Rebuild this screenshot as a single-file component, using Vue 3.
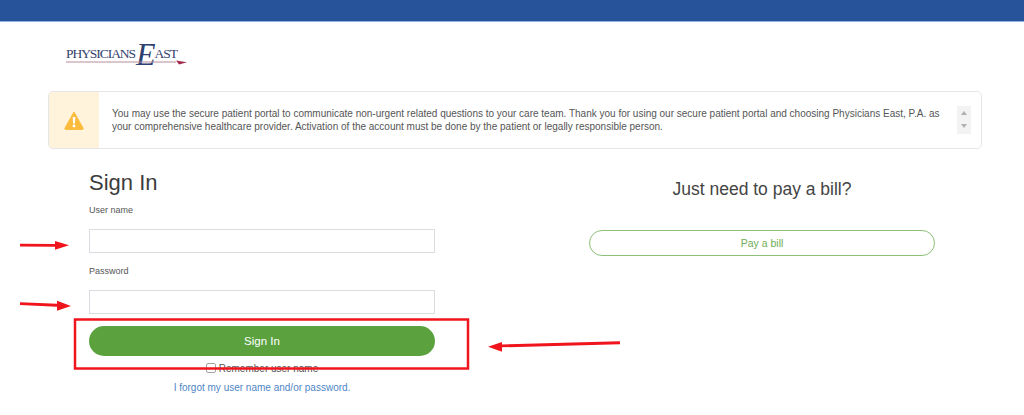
<template>
  <div class="page">
    <header class="topbar"></header>

    <div class="logo">
      <div class="logo-word">
        <span>PHYSICIANS</span>
        <span class="logo-e">E</span>
        <span>AST</span>
      </div>
      <svg class="logo-rule" width="122" height="5" viewBox="0 0 122 5">
        <path d="M0 2h110" stroke="#b98d9d" stroke-width="1.2" />
        <path d="M110 .5l11 1.700-8 2.300z" fill="#a32a4c" />
      </svg>
    </div>

    <section class="notice">
      <div class="notice-icon">
        <svg width="20" height="19" viewBox="0 0 20 19">
          <path d="M10 1 19 17a1 1 0 0 1-1 1.400H2A1 1 0 0 1 1 17z" fill="#fbbc3d" stroke="#fbbc3d" stroke-linejoin="round" />
          <path d="M8.700 6h2.600l-.4 6.500H9.100z" fill="#fff" />
          <circle cx="10" cy="15" r="1.400" fill="#fff" />
        </svg>
      </div>
      <p class="notice-text">{{ notice }}</p>
      <div class="scroller">
        <span class="tri up"></span>
        <span class="tri down"></span>
      </div>
    </section>

    <main class="columns">
      <form class="signin" @submit.prevent>
        <h1>Sign In</h1>
        <label for="user">User name</label>
        <input id="user" type="text" />
        <label for="pass" class="second">Password</label>
        <input id="pass" type="password" />
        <button class="primary" type="submit">Sign In</button>
        <div class="remember">
          <span class="box"></span>
          <span>Remember user name</span>
        </div>
        <a class="forgot" href="#">I forgot my user name and/or password.</a>
      </form>

      <aside class="bill">
        <h2>Just need to pay a bill?</h2>
        <button class="outline" type="button">Pay a bill</button>
      </aside>
    </main>

    <!-- red markup drawn over the screenshot -->
    <svg class="markup" width="1024" height="415" viewBox="0 0 1024 415">
      <g fill="#f0141c" stroke="none">
        <path d="M20 243.800 55 244V241l14 4.300-14 4.500V246.800L20 246.600z" />
        <path d="M20 302.200 57 303.700V300.800l14 5.200-14 4.700V306.700L20 305.100z" />
        <path d="M620 341.200 502 344.400V342l-14 4.700 14 5V347.300L620 344.300z" />
      </g>
      <rect x="75" y="319.500" width="393" height="49" fill="none" stroke="#f0141c" stroke-width="2.500" />
    </svg>
  </div>
</template>

<script setup>
const notice = 'You may use the secure patient portal to communicate non-urgent related questions to your care team. Thank you for using our secure patient portal and choosing Physicians East, P.A. as your comprehensive healthcare provider. Activation of the account must be done by the patient or legally responsible person.'
</script>

<style>
html, body {
  margin: 0;
  background: #fff;
}
</style>

<style scoped>
.page {
  position: relative;
  width: 1024px;
  height: 415px;
  overflow: hidden;
  font-family: "Liberation Sans", Arial, sans-serif;
  color: #444;
}

.topbar {
  height: 21px;
  background: #27539b;
  border-bottom: 1px solid #8db4e2;
}

.logo {
  width: 122px;
  height: 69px;
  margin-left: 66px;
  box-sizing: border-box;
  padding-top: 23px;
}

.logo-word {
  display: flex;
  align-items: center;
  height: 18px;
  font-family: "Liberation Serif", serif;
  font-size: 13.500px;
  letter-spacing: -1.050px;
  color: #33426f;
}

.logo-e {
  font-size: 32px;
  font-style: italic;
  line-height: 18px;
  margin: 0 0 0 1px;
  color: #2c4170;
}

.logo-rule {
  display: block;
  margin-top: -3px;
}

.notice {
  display: flex;
  align-items: center;
  box-sizing: border-box;
  width: 934px;
  height: 58px;
  margin-left: 48px;
  border: 1px solid #e6e6e6;
  border-radius: 5px;
  overflow: hidden;
}

.notice-icon {
  flex: none;
  width: 50px;
  height: 100%;
  display: flex;
  align-items: center;
  justify-content: center;
  background: #fff3dc;
}

.notice-text {
  flex: none;
  width: 838px;
  margin: 0 0 0 13px;
  font-size: 10px;
  line-height: 13px;
  color: #555;
}

.scroller {
  flex: none;
  width: 14px;
  height: 28px;
  margin-left: 7px;
  display: flex;
  flex-direction: column;
  align-items: center;
  gap: 9px;
  padding-top: 5px;
  box-sizing: border-box;
  background: #f3f3f3;
}

.tri {
  width: 0;
  height: 0;
  border-left: 3.500px solid transparent;
  border-right: 3.500px solid transparent;
}

.tri.up {
  border-bottom: 4px solid #b0b0b0;
}

.tri.down {
  border-top: 4px solid #b0b0b0;
}

.columns {
  display: grid;
  grid-template-columns: 346px 346px;
  column-gap: 154px;
  padding-left: 89px;
}

.signin {
  display: flex;
  flex-direction: column;
}

h1 {
  margin: 20px 0 0;
  font-size: 22px;
  line-height: 28px;
  font-weight: 400;
  color: #3c3c3c;
}

label {
  margin-top: 7px;
  font-size: 9px;
  line-height: 12px;
  color: #555;
}

label.second {
  margin-top: 12px;
}

input {
  box-sizing: border-box;
  width: 346px;
  height: 24px;
  margin-top: 13px;
  padding: 0 6px;
  border: 1px solid #d9dde2;
  background: #fff;
  outline: none;
}

.primary {
  height: 30px;
  margin-top: 12px;
  border: none;
  border-radius: 15px;
  background: #5ba23f;
  color: #fff;
  font-family: inherit;
  font-size: 11.500px;
}

.remember {
  display: flex;
  align-items: center;
  justify-content: center;
  gap: 3px;
  height: 10px;
  margin-top: 7px;
  font-size: 10px;
  color: #555;
}

.box {
  box-sizing: border-box;
  width: 10px;
  height: 10px;
  border: 1px solid #a5a5a5;
  border-radius: 2px;
}

.forgot {
  margin-top: 9px;
  text-align: center;
  font-size: 10px;
  line-height: 12px;
  color: #4f86c6;
  text-decoration: none;
}

.bill {
  display: flex;
  flex-direction: column;
}

h2 {
  margin: 29px 0 0;
  text-align: center;
  font-size: 17.500px;
  line-height: 22px;
  font-weight: 400;
  color: #444;
}

.outline {
  height: 26px;
  margin-top: 30px;
  border: 1px solid #8dc078;
  border-radius: 13px;
  background: #fff;
  color: #6fae55;
  font-family: inherit;
  font-size: 10.500px;
}

.markup {
  position: absolute;
  left: 0;
  top: 0;
  pointer-events: none;
}
</style>
